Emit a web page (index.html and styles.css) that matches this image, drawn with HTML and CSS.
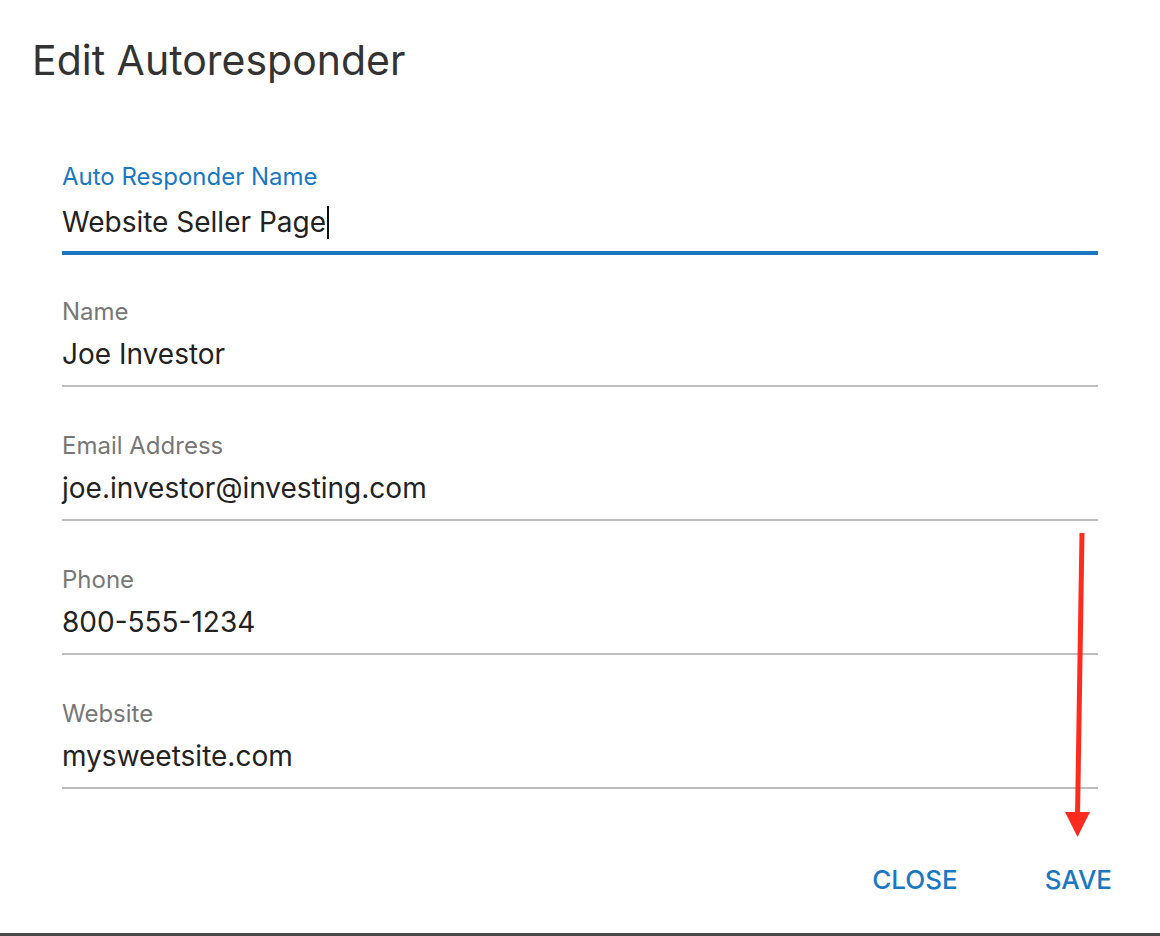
FILE: index.html
```html
<!DOCTYPE html>
<html>
<head>
<meta charset="utf-8">
<link rel="stylesheet" href="styles.css">
</head>
<body>
<div class="dialog">
  <h1 class="title">Edit Autoresponder</h1>
  <form class="form">
    <div class="field field--focused">
      <label class="label">Auto Responder Name</label>
      <div class="value">Website Seller Page<span class="caret"></span></div>
    </div>
    <div class="field">
      <label class="label">Name</label>
      <div class="value">Joe Investor</div>
    </div>
    <div class="field">
      <label class="label">Email Address</label>
      <div class="value">joe.investor@investing.com</div>
    </div>
    <div class="field">
      <label class="label">Phone</label>
      <div class="value">800-555-1234</div>
    </div>
    <div class="field">
      <label class="label">Website</label>
      <div class="value">mysweetsite.com</div>
    </div>
  </form>
  <div class="actions">
    <button class="btn" type="button">CLOSE</button>
    <button class="btn" type="button">SAVE</button>
  </div>
  <svg class="arrow" width="40" height="320" viewBox="1060 525 40 320">
    <line x1="1082" y1="533" x2="1077.5" y2="816" stroke="#ff2b1f" stroke-width="5"/>
    <polygon points="1065,812 1090,812 1077.5,837" fill="#ff2b1f"/>
  </svg>
</div>
</body>
</html>
```
FILE: styles.css
```css
* { box-sizing: border-box; }
html, body { margin: 0; padding: 0; background: #fff; }
body { font-family: Inter, "Open Sans", Arial, sans-serif; }

.dialog {
  position: relative;
  width: 1160px;
  height: 936px;
  border-bottom: 3px solid #4a4a4a;
  display: flex;
  flex-direction: column;
}

.title {
  margin: 0;
  padding: 30px 0 0 32px;
  font-size: 41px;
  line-height: 60px;
  font-weight: 400;
  color: #333;
}

.form {
  margin: 0 62px;
  padding-top: 72.5px;
  display: flex;
  flex-direction: column;
}

.field {
  display: flex;
  flex-direction: column;
  padding-top: 44.5px;
  padding-bottom: 14px;
  border-bottom: 2px solid #bdbdbd;
}

.field--focused {
  padding-top: 0;
  padding-bottom: 12px;
  border-bottom: 4px solid #1a78c2;
}

.field--focused + .field { padding-top: 42.5px; }

.label {
  font-size: 24px;
  line-height: 28px;
  color: #777;
}

.field--focused .label { color: #1a78c2; }

.value {
  margin-top: 11.5px;
  font-size: 28px;
  line-height: 34px;
  color: #222;
  display: flex;
  align-items: center;
}

.field--focused .value { margin-top: 14.5px; }

.caret {
  display: inline-block;
  width: 2px;
  height: 33px;
  background: #111;
  margin-left: 1px;
}

.actions {
  display: flex;
  justify-content: flex-end;
  gap: 87px;
  padding: 74px 48px 0 0;
}

.btn {
  border: 0;
  background: none;
  padding: 0;
  font-family: inherit;
  font-size: 26px;
  line-height: 34px;
  font-weight: 500;
  color: #1a78c2;
  cursor: pointer;
}

.arrow {
  position: absolute;
  left: 1060px;
  top: 525px;
}
```
